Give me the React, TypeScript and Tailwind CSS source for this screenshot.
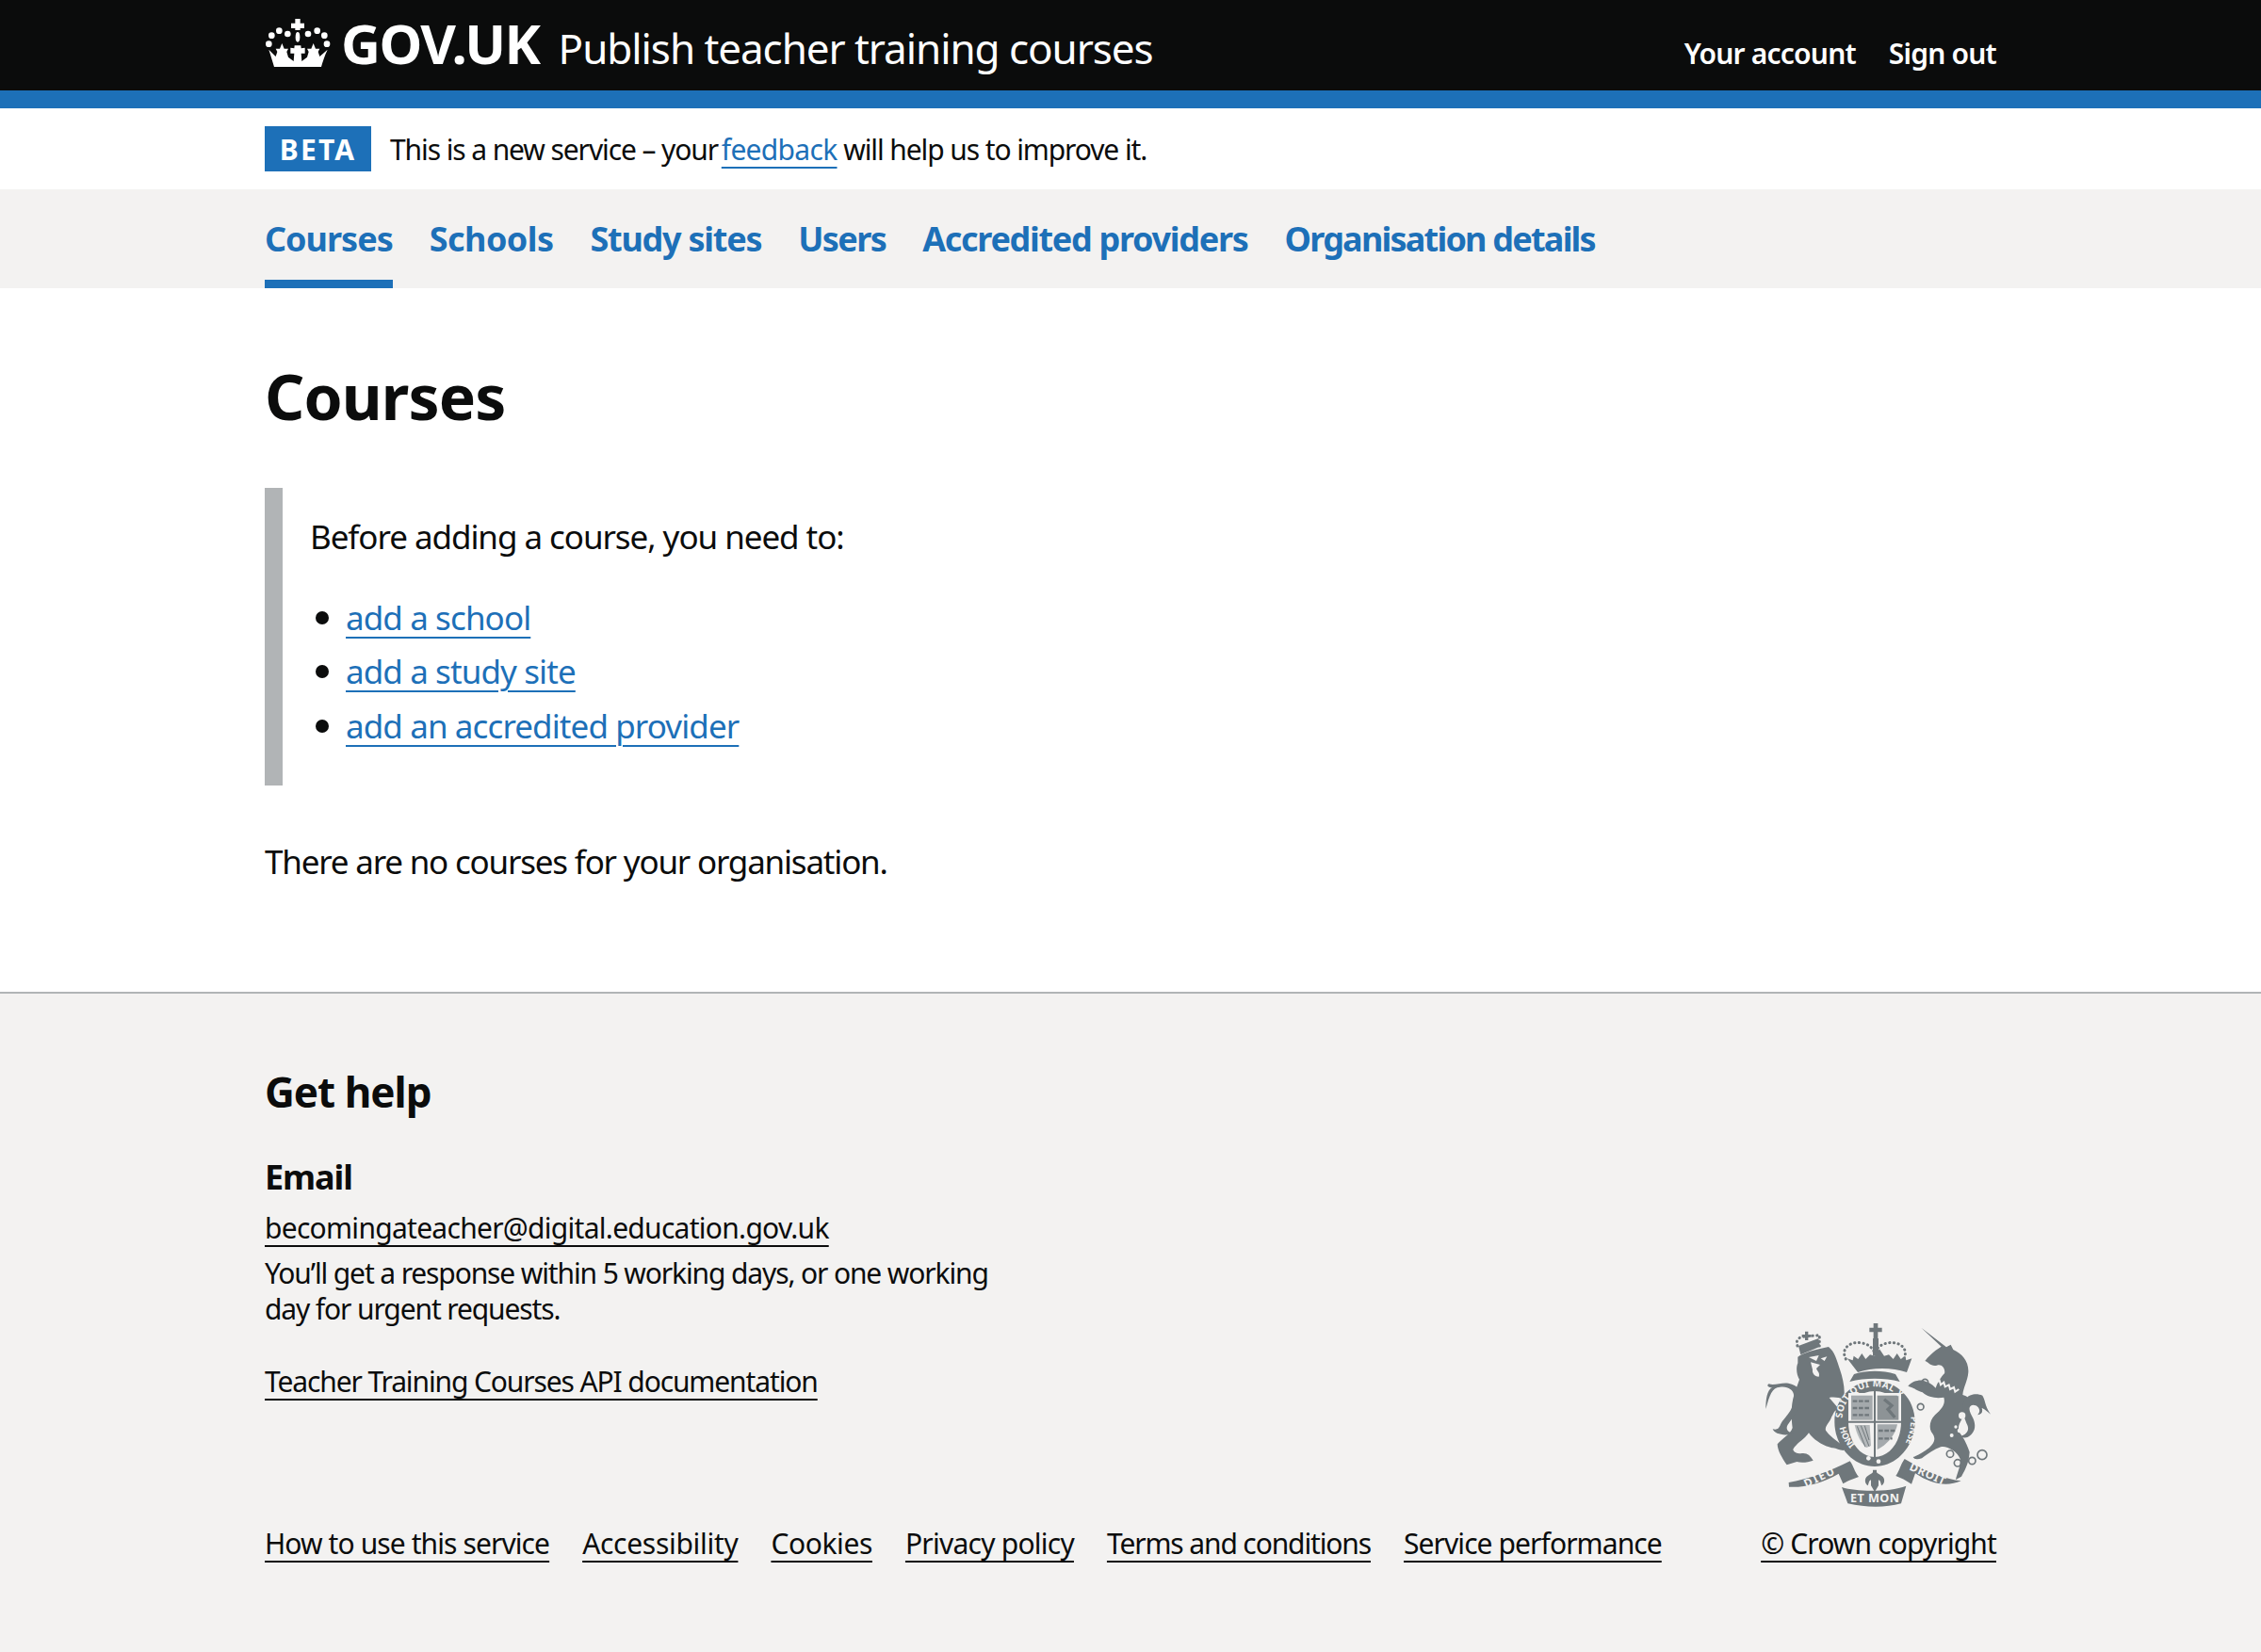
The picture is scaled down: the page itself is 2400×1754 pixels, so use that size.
const font = { fontFamily: '"Noto Sans", sans-serif' };

function Crown() {
  return (
    <svg width="70" height="52" viewBox="30 30 210 156" className="shrink-0">
      <g fill="#fff">
        <path d="M127 30h16v14h13v16h-13v6h-16v-6h-13V44h13z" />
        <ellipse cx="135" cy="88" rx="7" ry="16" />
        <circle cx="76" cy="68" r="10" /><circle cx="103" cy="78" r="10" />
        <circle cx="168" cy="78" r="10" /><circle cx="197" cy="68" r="10" />
        <circle cx="52" cy="83" r="10" /><circle cx="220" cy="83" r="10" />
        <circle cx="43" cy="110" r="10" /><circle cx="228" cy="110" r="10" />
        <path d="M43 128C50 150 55 165 60 183H210C215 165 220 150 230 128L205 150L200 135L205 125L192 125L185 108L178 125L165 125L170 135L165 152L148 165L146 140L158 140L158 122L146 124L145 115H125L124 124L112 122L112 140L124 140L122 165L105 152L100 135L105 125L92 125L85 108L78 125L65 125L70 135L65 150Z" />
      </g>
    </svg>
  );
}

function Crest() {
  return (
    <svg width="300" height="240" viewBox="0 0 900 720" className="block">
      <g fill="#6f777b" stroke="none">
        {/* royal crown */}
        <path d="M446 78h14v14h13v14h-13v20h-14v-20h-13V92h13z" />
        <path d="M444 126h18v56h-18z" />
        <path d="M362 190l18 6 3-14 14 10 12-18 12 18 14-14 15 4 15-22 15 22 15-4 14 14 12-18 12 18 14-10 3 14 18-6-16 44c-25-8-50-12-78-12s-53 4-78 12z" />
        <path d="M384 240c20-7 45-10 66-10s46 3 66 10l14 24c-25-7-52-10-80-10s-55 3-80 10z" />
        {/* lion crown */}
        <path d="M207 150l64-24 5 26-62 26z" />
        <path d="M228 104h10v10h10v8h-10v10h-10v-10h-10v-8h10z" />
        {/* lion */}
        <path d="M205 185c15-12 50-22 98-32 20 16 26 42 36 72 10 30 18 65 12 95-15-5-30-8-46-5l60 70-35-30c-10 0-12 15-18 22-6 18-22 28-18 42 10 15 30 30 48 44 8 6 14 12 8 20-14 0-24-10-36-8-30-8-58-25-74-48-14 20-38 32-50 52 0 8 12 14 24 14 20-4 30 6 40 22-16 6-38 8-52 4l-32 10c-14-20-30-46-30-66 10-14 42-32 48-52-4-32-6-72 6-108 4-16 12-32 16-46-8-14-12-36-5-52z" />
        <path d="M190 430c-30 8-60 0-65-15 25 6 20-14 35-30 20-25 38-48 32-80-2-16-20-28-44-24-26 2-32 24-45 70 0-30 4-60 20-68-14 0-18-8-10-12 18 6 42-6 62-2 32 6 40 24 38 50-2 30-20 56-40 82-6 10-4 22 17 28z" />
        {/* unicorn */}
        <path d="M598 92l80 62 14-8 8 16c28 12 50 38 48 72-2 28-16 48-18 72 30 8 14 20 8 48-4 32-30 44-18 72 18 24 26 44 32 62-2 30-10 50-26 78l-18 10c4-22 16-40 14-66-10-26-46-44-62-38-18 6-42 22-60 36-14 4-24 4-28-4 18-6 34-16 52-30 18-18 22-30 6-50-8-16-4-38 12-54 22-20 34-34 28-56-24 4-50 0-68-16-20-8-32-16-46-20 8-10 28-22 48-18 14 4 28 10 40 24 8-22 18-36 28-46 4-14-8-32-24-26-20 4-26-10-38-14 10-14 22-24 34-34l18-12z" />
        <path d="M735 322c20-22 42-20 58-14 10 16 6 30 26 60-14-12-22-18-28-20 4 12 0 20-14 22 14-12 4-32-14-32-20 4-10 24 0 42 10 22 8 46-16 60-10 4-20 2-24-2 22-6 30-22 20-40-8-24-22-44-8-76z" />
        {/* ribbons */}
        <path d="M176 585c60-10 130-34 195-68 12 16 14 34 28 50-16 6-30 10-50 22l-14-32c-50 30-110 45-158 42z" />
        <path d="M725 580c-60-6-122-36-180-70-14 20-16 38-28 54 16 6 32 14 50 26l12-34c50 34 100 44 146 24z" />
        <path d="M345 600c50 16 150 16 205-4l-16 56c-50 14-110 14-170 0z" />
        {/* fleur */}
        <path d="M444 545h12v8c5 6 14 8 20 14 8 10 4 22-4 28-4-8-2-14-10-18v18l-12 20-12-20v-18c-8 4-6 10-10 18-8-6-12-18-4-28 6-6 15-8 20-14z" />
        {/* garter ring */}
        <path fillRule="evenodd" d="M450 262c72 0 128 56 128 130s-56 142-128 142-128-68-128-142 56-130 128-130zm0 32c-46 0-84 34-84 98s38 112 84 112 84-48 84-112-38-98-84-98z" />
        {/* shield quarters */}
        <path d="M366 300h84v92h-84zM450 300h84v92h-84zM370 392h80v100c-40-14-70-50-80-100zM450 392h80c-10 50-40 86-80 100z" fill="#f3f2f1" />
        <path d="M375 308h68v78h-68z" fill="#a4a9ac" />
        <path d="M458 308h68v78h-68z" fill="#8d9396" />
        <path d="M458 400h64c-6 34-34 66-64 80z" fill="#a4a9ac" />
        <path d="M386 402l48 0 4 66-14 6c-20-16-30-40-38-72z" fill="#b4b8ba" />
      </g>
      <g fill="none" stroke="#6f777b" strokeWidth="3">
        <path d="M394 406l26 66M406 404l26 66M418 404l14 46" />
        <path d="M380 326h56M380 348h56M380 370h56M462 420h54M462 445h44" strokeWidth="7" strokeDasharray="14 5" />
        <path d="M480 320l24 20-12 12 22 26" strokeWidth="10" />
      </g>
      <g fill="none" stroke="#6f777b" strokeWidth="6" strokeLinecap="round">
        <path d="M450 294v212M366 392h168" />
        <circle cx="690" cy="494" r="11" strokeWidth="5" /><circle cx="714" cy="523" r="11" strokeWidth="5" /><circle cx="760" cy="516" r="11" strokeWidth="5" /><circle cx="792" cy="497" r="15" strokeWidth="5" />
        <circle cx="610" cy="266" r="10" strokeWidth="5" /><circle cx="596" cy="344" r="10" strokeWidth="5" />
      </g>
      <g fill="none" stroke="#6f777b" strokeWidth="9" strokeLinecap="round" strokeDasharray="1 13">
        <path d="M204 150c-8-16 6-30 20-30" />
        <path d="M224 120l50-4 0 34" />
        <path d="M358 192c-18-34 14-56 46-52 22 3 38 12 46 34 8-22 24-31 46-34 32-4 64 18 46 52" />
      </g>
      <g fill="#f3f2f1">
        <path d="M240 186l32-6-8 18zM278 190l20-6-8 14zM246 202l30 8-12 12c4 10 12 14 8 26-14 0-22-12-20-22z" />
        <circle cx="720" cy="420" r="7" /><circle cx="695" cy="435" r="6" /><circle cx="708" cy="408" r="5" />
        <circle cx="430" cy="508" r="7" /><circle cx="462" cy="518" r="7" />
        <circle cx="728" cy="372" r="11" />
      </g>
      <g fill="none" stroke="#f3f2f1" strokeWidth="6">
        <path d="M632 262l10-8 4 12 10-6 4 14 10-8 4 14 12-6 4 14 12-6 4 14 12-8" />
      </g>
      <g fill="#f3f2f1" fontFamily="Noto Sans, sans-serif" fontWeight="700">
        <text x="372" y="648" fontSize="38" textLength="156">ET MON</text>
        <text transform="translate(232 602) rotate(-26)" fontSize="36" letterSpacing="5">DIEU</text>
        <text transform="translate(558 544) rotate(24)" fontSize="36" letterSpacing="2">DROIT</text>
        <path id="garter-top" d="M347 380a103 100 0 0 1 206 0" fill="none" />
        <text fontSize="30" letterSpacing="1"><textPath href="#garter-top">SOIT QUI MAL Y</textPath></text>
        <path id="garter-right" d="M565 375c2 50-16 90-40 120" fill="none" />
        <text fontSize="28"><textPath href="#garter-right">PENSE</textPath></text>
        <path id="garter-left" d="M338 410c6 30 20 54 40 74" fill="none" />
        <text fontSize="28"><textPath href="#garter-left">HONI</textPath></text>
      </g>
    </svg>
  );
}

const NavLink = ({ children, active, track }: { children: string; active?: boolean; track: string }) => (
  <a className={`block h-[105px] pt-[30px] leading-[46px] text-[36px] font-bold text-[#1d70b8] ${track} ${active ? "border-b-[9px] border-[#1d70b8]" : ""}`}>{children}</a>
);

const FootLink = ({ children, track }: { children: string; track: string }) => (
  <a className={`text-[30px] leading-[40px] underline decoration-[2px] underline-offset-[7px] text-[#0b0c0c] whitespace-nowrap ${track}`}>{children}</a>
);

const ItemLink = ({ children }: { children: string }) => (
  <li className="flex items-center h-[57.5px]">
    <span className="w-[38px] flex-none pl-[6px]"><span className="block w-[14px] h-[14px] rounded-full bg-[#0b0c0c]" /></span>
    <a className="text-[35px] text-[#1d70b8] underline decoration-[2px] underline-offset-[7px] tracking-[-0.9px]">{children}</a>
  </li>
);

export default function App() {
  return (
    <div style={font} className="min-h-[1754px] bg-white text-[#0b0c0c] flex flex-col">
      <header className="bg-[#0b0c0c] border-b-[19px] border-[#1d70b8] h-[115px] px-[281px] flex items-start justify-between text-white">
        <div className="flex items-start pt-[20px]">
          <Crown />
          <span className="ml-[11px] text-[58px] leading-[58px] font-bold tracking-[-1.5px] -mt-[3px]">GOV.UK</span>
          <span className="ml-[20px] text-[44px] leading-[62px] tracking-[-1.06px]">Publish teacher training courses</span>
        </div>
        <div className="flex gap-[35px] pt-[37px] text-[30px] leading-[40px] font-semibold tracking-[-0.8px]">
          <span>Your account</span>
          <span>Sign out</span>
        </div>
      </header>
      <div className="h-[86px] px-[281px] flex items-center">
        <strong className="bg-[#1d70b8] text-white w-[113px] h-[48px] flex items-center justify-center text-[30px] font-bold tracking-[2.2px]">BETA</strong>
        <p className="ml-[20px] text-[30px] tracking-[-1.1px]">This is a new service – your <a className="-ml-[3px] text-[#1d70b8] underline decoration-[2px] underline-offset-[7px] tracking-[-0.7px]">feedback</a> will help us to improve it.</p>
      </div>
      <nav className="bg-[#f3f2f1] h-[105px] px-[281px] flex gap-[39px]">
        <NavLink active track="tracking-[-1px]">Courses</NavLink>
        <NavLink track="tracking-[-0.55px]">Schools</NavLink>
        <NavLink track="tracking-[-1.26px]">Study sites</NavLink>
        <NavLink track="tracking-[-1.6px]">Users</NavLink>
        <NavLink track="tracking-[-1.3px]">Accredited providers</NavLink>
        <NavLink track="tracking-[-1.78px]">Organisation details</NavLink>
      </nav>
      <main className="px-[281px] h-[747px] pt-[74px]">
        <h1 className="text-[66px] leading-[80px] font-bold tracking-[-0.9px]">Courses</h1>
        <div className="mt-[58px] h-[316px] border-l-[19px] border-[#b1b4b6] pl-[29px] pt-[27px]">
          <p className="text-[35px] leading-[50px] tracking-[-1.06px]">Before adding a course, you need to:</p>
          <ul className="mt-[32px]">
            <ItemLink>add a school</ItemLink>
            <ItemLink>add a study site</ItemLink>
            <ItemLink>add an accredited provider</ItemLink>
          </ul>
        </div>
        <p className="mt-[56px] text-[35px] leading-[50px] tracking-[-1.2px]">There are no courses for your organisation.</p>
      </main>
      <footer className="flex-1 bg-[#f3f2f1] border-t-2 border-[#b1b4b6] px-[281px] pt-[74px]">
        <div className="flex justify-between items-end">
          <div className="flex-1">
            <h2 className="text-[44px] leading-[60px] font-bold tracking-[-1px]">Get help</h2>
            <h3 className="mt-[36px] text-[36px] leading-[50px] font-bold tracking-[-1.1px]">Email</h3>
            <p className="mt-[9px]"><FootLink track="tracking-[-0.72px]">becomingateacher@digital.education.gov.uk</FootLink></p>
            <p className="mt-[9px] w-[800px] text-[30px] leading-[38px] tracking-[-1.13px]">You’ll get a response within 5 working days, or one working day for urgent requests.</p>
            <p className="mt-[38px]"><FootLink track="tracking-[-1.12px]">Teacher Training Courses API documentation</FootLink></p>
            <div className="mt-[132px] flex gap-[35px]">
              <FootLink track="tracking-[-0.9px]">How to use this service</FootLink>
              <FootLink track="tracking-[-0.3px]">Accessibility</FootLink>
              <FootLink track="tracking-[-0.4px]">Cookies</FootLink>
              <FootLink track="tracking-[-0.76px]">Privacy policy</FootLink>
              <FootLink track="tracking-[-1.13px]">Terms and conditions</FootLink>
              <FootLink track="tracking-[-0.92px]">Service performance</FootLink>
            </div>
          </div>
          <div className="flex flex-col items-end">
            <div className="mr-[-21px]"><Crest /></div>
            <FootLink track="tracking-[-0.87px]">© Crown copyright</FootLink>
          </div>
        </div>
      </footer>
    </div>
  );
}
